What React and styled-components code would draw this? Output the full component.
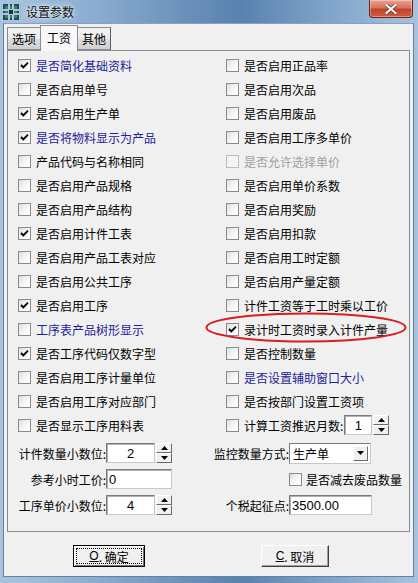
import React from 'react';
import styled, { createGlobalStyle } from 'styled-components';

const Global = createGlobalStyle`
  html, body { margin: 0; padding: 0; background: #6d8fb5; }
  body { width: 418px; height: 583px; overflow: hidden; }
  * { box-sizing: border-box; }
`;

const CJK = `"Noto Sans CJK SC", "Noto Sans", sans-serif`;
const NUM = `"Liberation Sans", "Noto Sans CJK SC", sans-serif`;

const Frame = styled.div`
  width: 418px;
  height: 583px;
  display: flex;
  flex-direction: column;
  background: linear-gradient(90deg, #a9c4df 0%, #8eb0d2 20%, #6a90ba 45%, #5a82b0 58%, #7fa3c9 78%, #a6c2df 100%);
  font-family: ${CJK};
  font-size: 12px;
  color: #000;
`;

const TitleBar = styled.div`
  height: 23px;
  display: flex;
  align-items: flex-start;
  padding-left: 3px;
`;

const AppIcon = styled.svg`
  width: 16px;
  height: 16px;
  margin-top: 4px;
  flex: none;
`;

const Title = styled.div`
  margin-left: 7px;
  margin-top: 3px;
  font-size: 12px;
  line-height: 17px;
  color: #111;
  text-shadow: 0 0 6px rgba(255,255,255,0.9), 0 0 3px rgba(255,255,255,0.8);
`;

const CloseBtn = styled.div`
  margin-left: auto;
  margin-right: 5px;
  width: 44px;
  height: 18px;
  border: 1px solid #6b2416;
  border-top: none;
  border-radius: 0 0 4px 4px;
  background: linear-gradient(180deg, #e8a493 0%, #d6735c 45%, #c24528 55%, #cd5d3e 100%);
  box-shadow: inset 0 0 0 1px rgba(255,255,255,0.35);
  display: flex;
  align-items: center;
  justify-content: center;
`;

const Client = styled.div`
  flex: 1;
  margin: 0 4px 6px 3px;
  background: #f0f0f0;
  border: 1px solid #6a7f99;
  border-top-color: #8aa0bb;
  display: flex;
  flex-direction: column;
  padding: 1px 3px 0 3px;
`;

const TabStrip = styled.div`
  height: 25px;
  display: flex;
  align-items: flex-end;
  position: relative;
  z-index: 1;
`;

const Tab = styled.div`
  height: ${p => (p.$active ? 26 : 23)}px;
  padding: 0 ${p => (p.$active ? 6 : 4)}px ${p => (p.$active ? 2 : 0)}px;
  margin: 0 ${p => (p.$active ? -1 : 0)}px ${p => (p.$active ? -1 : 0)}px;
  border: 1px solid #898c95;
  border-bottom: ${p => (p.$active ? 'none' : '1px solid #898c95')};
  border-right-color: ${p => (p.$last ? '#5a5d66' : '#898c95')};
  background: ${p => (p.$active ? '#f7f7f7' : 'linear-gradient(180deg, #f2f2f2 0%, #ebebeb 50%, #dddddd 51%, #cfcfcf 100%)')};
  display: flex;
  align-items: center;
  font-size: 12px;
  line-height: 1;
  position: relative;
  z-index: ${p => (p.$active ? 2 : 1)};
`;

const Panel = styled.div`
  height: 482px;
  border: 1px solid #898c95;
  background: #f0f0f0;
  padding: 2px 0 0 10px;
  display: flex;
  flex-direction: column;
`;

const CheckGrid = styled.div`
  display: grid;
  grid-template-columns: 208px 1fr;
  grid-auto-rows: 24px;
`;

const Row = styled.div`
  display: flex;
  align-items: center;
  gap: 5px;
  position: relative;
  color: ${p => (p.$disabled ? '#a0a0a0' : p.$blue ? '#1e2298' : '#000')};
  white-space: nowrap;
`;

const Box = styled.span`
  width: 13px;
  height: 13px;
  flex: none;
  border: 1px solid ${p => (p.$disabled ? '#bcbcbc' : '#8a8a8a')};
  background: ${p => (p.$disabled ? '#f4f4f4' : 'linear-gradient(135deg, #dcdcdc 0%, #f4f4f4 45%, #ffffff 100%)')};
  display: flex;
  align-items: center;
  justify-content: center;
`;

const Ellipse = styled.svg`
  position: absolute;
  left: -21px;
  top: -5px;
  width: 202px;
  height: 31px;
  pointer-events: none;
  overflow: visible;
`;

const Field = styled.div`
  height: ${p => p.$h || 20}px;
  width: ${p => p.$w}px;
  border: 1px solid #7a7a7a;
  border-right-color: #c8c8c8;
  border-bottom-color: #c8c8c8;
  box-shadow: inset 1px 1px 0 #b0b0b0;
  background: #fff;
  display: flex;
  align-items: center;
  justify-content: ${p => (p.$center ? 'center' : 'flex-start')};
  padding-left: ${p => (p.$center ? 0 : 2)}px;
  font-family: ${p => (p.$num ? NUM : CJK)};
  font-size: ${p => (p.$num ? 13 : 12)}px;
  color: #000;
  flex: none;
`;

const Spin = styled.div`
  width: 16px;
  height: ${p => p.$h || 20}px;
  margin-left: 1px;
  display: flex;
  flex-direction: column;
  flex: none;
`;

const SpinHalf = styled.div`
  flex: 1;
  background: #f0f0f0;
  border: 1px solid;
  border-color: #ffffff #6a6a6a #6a6a6a #ffffff;
  display: flex;
  align-items: center;
  justify-content: center;
`;

const Form = styled.div`
  display: grid;
  grid-template-columns: 88px 95px 88px 1fr;
  grid-auto-rows: 26px;
  margin-top: 3px;
`;

const Label = styled.div`
  display: flex;
  align-items: center;
  justify-content: flex-end;
  white-space: nowrap;
`;

const Cell = styled.div`
  display: flex;
  align-items: center;
  gap: ${p => p.$gap || 0}px;
  white-space: nowrap;
`;

const Select = styled.div`
  width: 82px;
  height: 21px;
  border: 1px solid #7a7a7a;
  border-right-color: #c8c8c8;
  border-bottom-color: #c8c8c8;
  background: #fff;
  display: flex;
  align-items: center;
  padding: 0 2px 0 3px;
`;

const SelectText = styled.span`
  flex: 1;
`;

const DropBtn = styled.div`
  width: 15px;
  height: 15px;
  background: #f0f0f0;
  border: 1px solid;
  border-color: #ffffff #6a6a6a #6a6a6a #ffffff;
  display: flex;
  align-items: center;
  justify-content: center;
`;

const ButtonBar = styled.div`
  flex: 1;
  display: flex;
  align-items: flex-start;
  padding: 13px 0 0 66px;
  gap: 116px;
`;

const Btn = styled.div`
  width: ${p => p.$w}px;
  height: 22px;
  background: #f0f0f0;
  border: 1px solid;
  border-color: ${p => (p.$focus ? '#000 #000 #000 #000' : '#ffffff #404040 #404040 #ffffff')};
  box-shadow: ${p => (p.$focus ? 'inset 1px 1px 0 #fff, inset -1px -1px 0 #707070' : 'inset -1px -1px 0 #a0a0a0')};
  display: flex;
  align-items: center;
  justify-content: center;
  padding: 2px;
`;

const BtnInner = styled.div`
  width: 100%;
  height: 100%;
  border: 1px dotted ${p => (p.$focus ? '#000' : 'transparent')};
  display: flex;
  align-items: center;
  justify-content: center;
  font-size: 12px;
`;

const Mn = styled.span`
  text-decoration: underline;
  font-family: ${NUM};
  font-size: 12px;
`;

const Check = () => (
  <svg width="9" height="9" viewBox="0 0 9 9">
    <path d="M1 4 L3.3 6.4 L8 1.6" stroke="#000" strokeWidth="1.9" fill="none" />
  </svg>
);

const CheckBox = ({ checked, disabled }) => (
  <Box $disabled={disabled}>{checked && <Check />}</Box>
);

const Tri = ({ up }) => (
  <svg width="7" height="4" viewBox="0 0 7 4">
    <path d={up ? 'M0 4 L3.5 0 L7 4 Z' : 'M0 0 L7 0 L3.5 4 Z'} fill="#000" />
  </svg>
);

const Spinner = ({ h }) => (
  <Spin $h={h}>
    <SpinHalf><Tri up /></SpinHalf>
    <SpinHalf><Tri /></SpinHalf>
  </Spin>
);

const left = [
  { t: '是否简化基础资料', c: true, blue: true },
  { t: '是否启用单号' },
  { t: '是否启用生产单', c: true },
  { t: '是否将物料显示为产品', c: true, blue: true },
  { t: '产品代码与名称相同' },
  { t: '是否启用产品规格' },
  { t: '是否启用产品结构' },
  { t: '是否启用计件工表', c: true },
  { t: '是否启用产品工表对应' },
  { t: '是否启用公共工序' },
  { t: '是否启用工序', c: true },
  { t: '工序表产品树形显示', blue: true },
  { t: '是否工序代码仅数字型', c: true },
  { t: '是否启用工序计量单位' },
  { t: '是否启用工序对应部门' },
  { t: '是否显示工序用料表' },
];

const right = [
  { t: '是否启用正品率' },
  { t: '是否启用次品' },
  { t: '是否启用废品' },
  { t: '是否启用工序多单价' },
  { t: '是否允许选择单价', disabled: true },
  { t: '是否启用单价系数' },
  { t: '是否启用奖励' },
  { t: '是否启用扣款' },
  { t: '是否启用工时定额' },
  { t: '是否启用产量定额' },
  { t: '计件工资等于工时乘以工价' },
  { t: '录计时工资时录入计件产量', c: true, circled: true },
  { t: '是否控制数量' },
  { t: '是否设置辅助窗口大小', blue: true },
  { t: '是否按部门设置工资项' },
  { t: '计算工资推迟月数:', spin: true },
];

const renderRow = (it, key) => (
  <Row key={key} $blue={it.blue} $disabled={it.disabled}>
    <CheckBox checked={it.c} disabled={it.disabled} />
    <span>{it.t}</span>
    {it.spin && (
      <Cell style={{ marginLeft: -4 }}>
        <Field $w={28} $h={20} $num $center>1</Field>
        <Spinner h={20} />
      </Cell>
    )}
    {it.circled && (
      <Ellipse viewBox="0 0 202 31">
        <ellipse cx="101" cy="15.5" rx="99.5" ry="14" stroke="#d42020" strokeWidth="2" fill="none" />
      </Ellipse>
    )}
  </Row>
);

export default function App() {
  const cells = [];
  for (let i = 0; i < 16; i++) {
    cells.push(renderRow(left[i], 'l' + i));
    cells.push(renderRow(right[i], 'r' + i));
  }
  return (
    <>
      <Global />
      <Frame>
        <TitleBar>
          <AppIcon viewBox="0 0 16 16">
            <rect x="0" y="0" width="16" height="16" fill="#1f4f47" />
            <rect x="2" y="2" width="12" height="12" fill="#3c7f6c" />
            <rect x="5" y="0" width="2" height="16" fill="#a9c4df" />
            <rect x="9" y="0" width="2" height="16" fill="#a9c4df" />
            <rect x="0" y="5" width="16" height="2" fill="#a9c4df" />
            <rect x="0" y="9" width="16" height="2" fill="#a9c4df" />
            <rect x="6" y="6" width="4" height="4" fill="#17382f" />
          </AppIcon>
          <Title>设置参数</Title>
          <CloseBtn>
            <svg width="12" height="10" viewBox="0 0 12 10">
              <path d="M1.5 1 L10.5 9 M10.5 1 L1.5 9" stroke="#5a1a0e" strokeWidth="3.4" strokeLinecap="square" />
              <path d="M1.5 1 L10.5 9 M10.5 1 L1.5 9" stroke="#ffffff" strokeWidth="2.2" strokeLinecap="square" />
            </svg>
          </CloseBtn>
        </TitleBar>
        <Client>
          <TabStrip>
            <Tab>选项</Tab>
            <Tab $active>工资</Tab>
            <Tab $last>其他</Tab>
          </TabStrip>
          <Panel>
            <CheckGrid>{cells}</CheckGrid>
            <Form>
              <Label>计件数量小数位:</Label>
              <Cell>
                <Field $w={49} $num $center>2</Field>
                <Spinner h={20} />
              </Cell>
              <Label>监控数量方式:</Label>
              <Cell>
                <Select>
                  <SelectText>生产单</SelectText>
                  <DropBtn><Tri /></DropBtn>
                </Select>
              </Cell>

              <Label>参考小时工价:</Label>
              <Cell>
                <Field $w={66} $num>0</Field>
              </Cell>
              <Label />
              <Cell $gap={4}>
                <CheckBox />
                <span>是否减去废品数量</span>
              </Cell>

              <Label>工序单价小数位:</Label>
              <Cell>
                <Field $w={49} $num $center>4</Field>
                <Spinner h={20} />
              </Cell>
              <Label>个税起征点:</Label>
              <Cell>
                <Field $w={83} $num>3500.00</Field>
              </Cell>
            </Form>
          </Panel>
          <ButtonBar>
            <Btn $w={72} $focus>
              <BtnInner $focus><Mn>O</Mn>.&nbsp;确定</BtnInner>
            </Btn>
            <Btn $w={68}>
              <BtnInner><Mn>C</Mn>.&nbsp;取消</BtnInner>
            </Btn>
          </ButtonBar>
        </Client>
      </Frame>
    </>
  );
}
